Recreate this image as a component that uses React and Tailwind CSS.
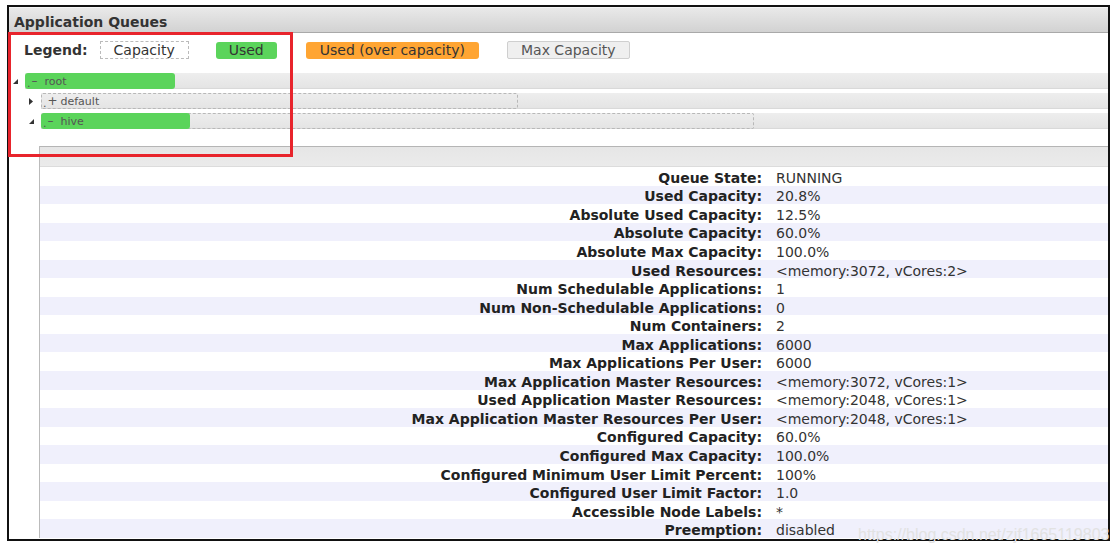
import React from 'react';

const rows = [
  ['Queue State:', 'RUNNING'],
  ['Used Capacity:', '20.8%'],
  ['Absolute Used Capacity:', '12.5%'],
  ['Absolute Capacity:', '60.0%'],
  ['Absolute Max Capacity:', '100.0%'],
  ['Used Resources:', '<memory:3072, vCores:2>'],
  ['Num Schedulable Applications:', '1'],
  ['Num Non-Schedulable Applications:', '0'],
  ['Num Containers:', '2'],
  ['Max Applications:', '6000'],
  ['Max Applications Per User:', '6000'],
  ['Max Application Master Resources:', '<memory:3072, vCores:1>'],
  ['Used Application Master Resources:', '<memory:2048, vCores:1>'],
  ['Max Application Master Resources Per User:', '<memory:2048, vCores:1>'],
  ['Configured Capacity:', '60.0%'],
  ['Configured Max Capacity:', '100.0%'],
  ['Configured Minimum User Limit Percent:', '100%'],
  ['Configured User Limit Factor:', '1.0'],
  ['Accessible Node Labels:', '*'],
  ['Preemption:', 'disabled'],
];

function OpenIcon() {
  return (
    <svg width="5" height="5" viewBox="0 0 5 5" className="block">
      <polygon points="5,0 5,5 0,5" fill="#333" />
    </svg>
  );
}

function ClosedIcon() {
  return (
    <svg width="4" height="7" viewBox="0 0 4 7" className="block">
      <polygon points="0,0 4,3.5 0,7" fill="#333" />
    </svg>
  );
}

function BarLabel({ sign, name }) {
  return (
    <span className="flex items-center h-full text-[11px] text-[#555] leading-none">
      <span className="ml-[2px] mt-[5px]">.</span>
      <span className="ml-[1px] w-[12px] text-[12px]">{sign}</span>
      <span className="ml-[1px]">{name}</span>
    </span>
  );
}

function TreeRow({ indent, open, used, maxw, dashed, sign, name }) {
  return (
    <div className="flex h-[16px]" style={{ paddingLeft: indent }}>
      <div className="w-[16px] flex items-center justify-center pr-[4px] pt-[1px]">
        {open ? <OpenIcon /> : <ClosedIcon />}
      </div>
      <div className="relative flex-1 bg-gradient-to-b from-[#eeeeee] to-[#e4e4e4] border-b border-[#d9d9d9]">
        {dashed && (
          <div className="absolute left-0 top-0 h-[16px] border border-dashed border-[#b8b8b8] rounded-[2px]" style={{ width: maxw }} />
        )}
        {used ? (
          <div className="absolute left-0 top-0 h-[16px] bg-[#5bd45b] rounded-[3px]" style={{ width: used }}>
            <BarLabel sign={sign} name={name} />
          </div>
        ) : (
          <div className="absolute left-0 top-0 h-[16px]">
            <BarLabel sign={sign} name={name} />
          </div>
        )}
      </div>
    </div>
  );
}

export default function App() {
  return (
    <div className="relative w-[1118px] h-[551px] bg-white overflow-hidden" style={{ fontFamily: '"DejaVu Sans", Verdana, sans-serif' }}>
      <div className="ml-[7px] mt-[5px] w-[1103px] h-[536px] border-2 border-[#111] overflow-hidden">
        {/* title bar */}
        <div className="h-[26px] bg-gradient-to-b from-[#e9e9e9] to-[#d2d2d2] border-t border-[#f4f4f4] border-b border-b-[#a9a9a9] flex items-center pl-[5px] pt-[4px]">
          <span className="text-[14px] font-bold text-[#333]">Application Queues</span>
        </div>

        {/* legend */}
        <div className="mt-[8px] h-[18px] flex items-center pl-[15px] text-[14px] text-[#333]">
          <span className="font-bold mr-[12px]">Legend:</span>
          <span className="h-[18px] flex items-center px-[13px] border border-dashed border-[#bbb]">Capacity</span>
          <span className="ml-[27px] h-[17px] flex items-center px-[13px] bg-[#5bd45b] rounded-[3px]">Used</span>
          <span className="ml-[29px] h-[17px] flex items-center px-[14px] bg-[#ffa533] rounded-[3px]">Used (over capacity)</span>
          <span className="ml-[28px] h-[18px] flex items-center px-[13px] bg-[#efefef] border border-[#cfcfcf] rounded-[2px] text-[#555]">Max Capacity</span>
        </div>

        {/* tree */}
        <div className="mt-[14px] flex flex-col gap-[4px]">
          <TreeRow indent="0px" open used="150px" sign="–" name="root" />
          <TreeRow indent="16px" open={false} dashed maxw="477px" sign="+" name="default" />
          <TreeRow indent="16px" open used="149px" dashed maxw="713px" sign="–" name="hive" />
        </div>

        {/* details panel */}
        <div className="mt-[17px] ml-[30px] border-l border-[#bbb]">
          <div className="h-[21px] bg-gradient-to-b from-[#e6e6e6] to-[#ebebeb] border-t border-[#b5b5b5] border-b border-b-[#dcdcdc]" />
          {rows.map(([label, value], i) => (
            <div key={label} className={`flex items-center h-[18.55px] pt-[4px] text-[14px] ${i % 2 === 1 ? 'bg-[#f0f0fc]' : 'bg-white'}`}>
              <div className="w-[722px] text-right font-bold text-[#222] whitespace-nowrap">{label}</div>
              <div className="pl-[14px] text-[#333] whitespace-nowrap">{value}</div>
            </div>
          ))}
        </div>
      </div>

      {/* annotation */}
      <div className="absolute left-[8px] top-[32px] w-[285px] h-[125px] border-[3px] border-[#e8242c]" />

      {/* watermark */}
      <div className="absolute left-[858px] top-[523px] text-[16px] text-[#e2e2e2] whitespace-nowrap" style={{ fontFamily: '"Liberation Sans", Arial, sans-serif' }}>
        https://blog.csdn.net/zjf1665119803
      </div>
    </div>
  );
}
